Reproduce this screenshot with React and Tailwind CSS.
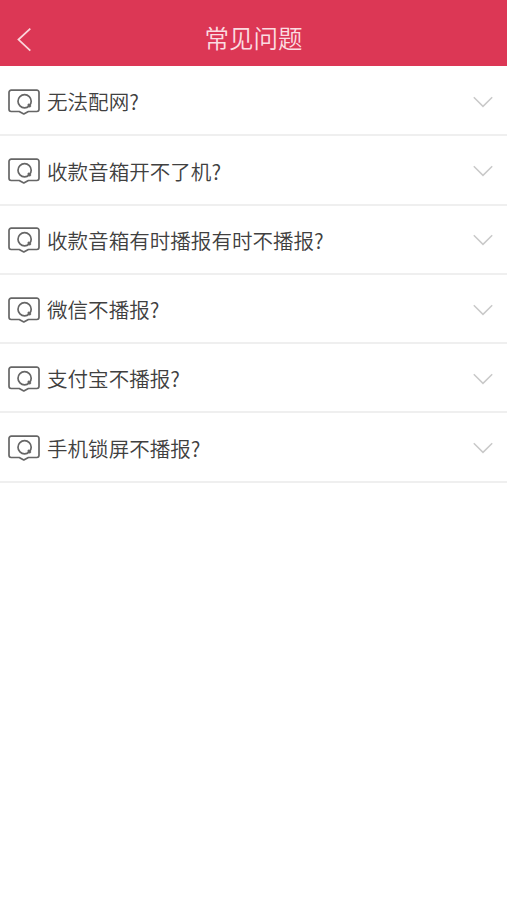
import React, { useState } from "react";

const QUESTIONS = [
  { id: 1, title: "无法配网?" },
  { id: 2, title: "收款音箱开不了机?" },
  { id: 3, title: "收款音箱有时播报有时不播报?" },
  { id: 4, title: "微信不播报?" },
  { id: 5, title: "支付宝不播报?" },
  { id: 6, title: "手机锁屏不播报?" },
];

function BackIcon() {
  return (
    <svg
      viewBox="0 0 16 26"
      className="h-[26px] w-4"
      fill="none"
      stroke="#fbd5db"
      strokeWidth="1.8"
    >
      <path d="M14.3 2.6 2.5 13.6 14.3 24.6" />
    </svg>
  );
}

// Speech bubble with a round "Q" inside
function QuestionIcon() {
  return (
    <svg
      viewBox="0 0 32 26"
      className="h-[26px] w-8 shrink-0"
      fill="none"
      stroke="#666"
      strokeWidth="1.7"
      strokeLinejoin="round"
    >
      <path d="M3.2 1.2h25.6A2.2 2.2 0 0 1 31 3.4v16.9a2.2 2.2 0 0 1-2.2 2.2H20.4l-4.6 2.5-4.6-2.5H3.2A2.2 2.2 0 0 1 1 20.3V3.4a2.2 2.2 0 0 1 2.2-2.2Z" />
      <circle cx="16.6" cy="12.3" r="6.6" />
      <path d="m20 15.2 2.6 2.6" strokeWidth="2.4" />
    </svg>
  );
}

function ChevronIcon() {
  return (
    <svg
      viewBox="0 0 20 12"
      className="h-3 w-5 shrink-0"
      fill="none"
      stroke="#c9c9c9"
      strokeWidth="1.5"
    >
      <path d="M.8 1.2 10 10.4l9.2-9.2" />
    </svg>
  );
}

function QuestionRow({ title, isOpen, onToggle }) {
  return (
    <button
      onClick={onToggle}
      aria-expanded={isOpen}
      className="flex h-[69.25px] w-full items-center border-b-2 border-[#efefef] pt-[2px] pr-3.5 pl-[7.5px] text-left"
    >
      <QuestionIcon />
      <span className="ml-[7.5px] flex-1 pb-px text-[20.55px] leading-7 font-[350] text-[#404040]">
        {title}
      </span>
      <ChevronIcon />
    </button>
  );
}

export default function App() {
  const [openId, setOpenId] = useState(null);

  return (
    <div className="min-h-screen bg-white font-['Noto_Sans_CJK_SC',sans-serif]">
      {/* Header */}
      <header className="grid h-[66px] grid-cols-[48px_1fr_48px] items-center bg-[#dc3755] pt-3">
        <button aria-label="返回" className="flex pl-4">
          <BackIcon />
        </button>
        <h1 className="pb-[3px] text-center text-[24.5px] leading-8 font-[350] text-[#fbdce1]">
          常见问题
        </h1>
      </header>

      {/* Question list */}
      <main className="pt-[1.2px]">
        {QUESTIONS.map((q) => (
          <QuestionRow
            key={q.id}
            title={q.title}
            isOpen={openId === q.id}
            onToggle={() => setOpenId(openId === q.id ? null : q.id)}
          />
        ))}
      </main>
    </div>
  );
}
